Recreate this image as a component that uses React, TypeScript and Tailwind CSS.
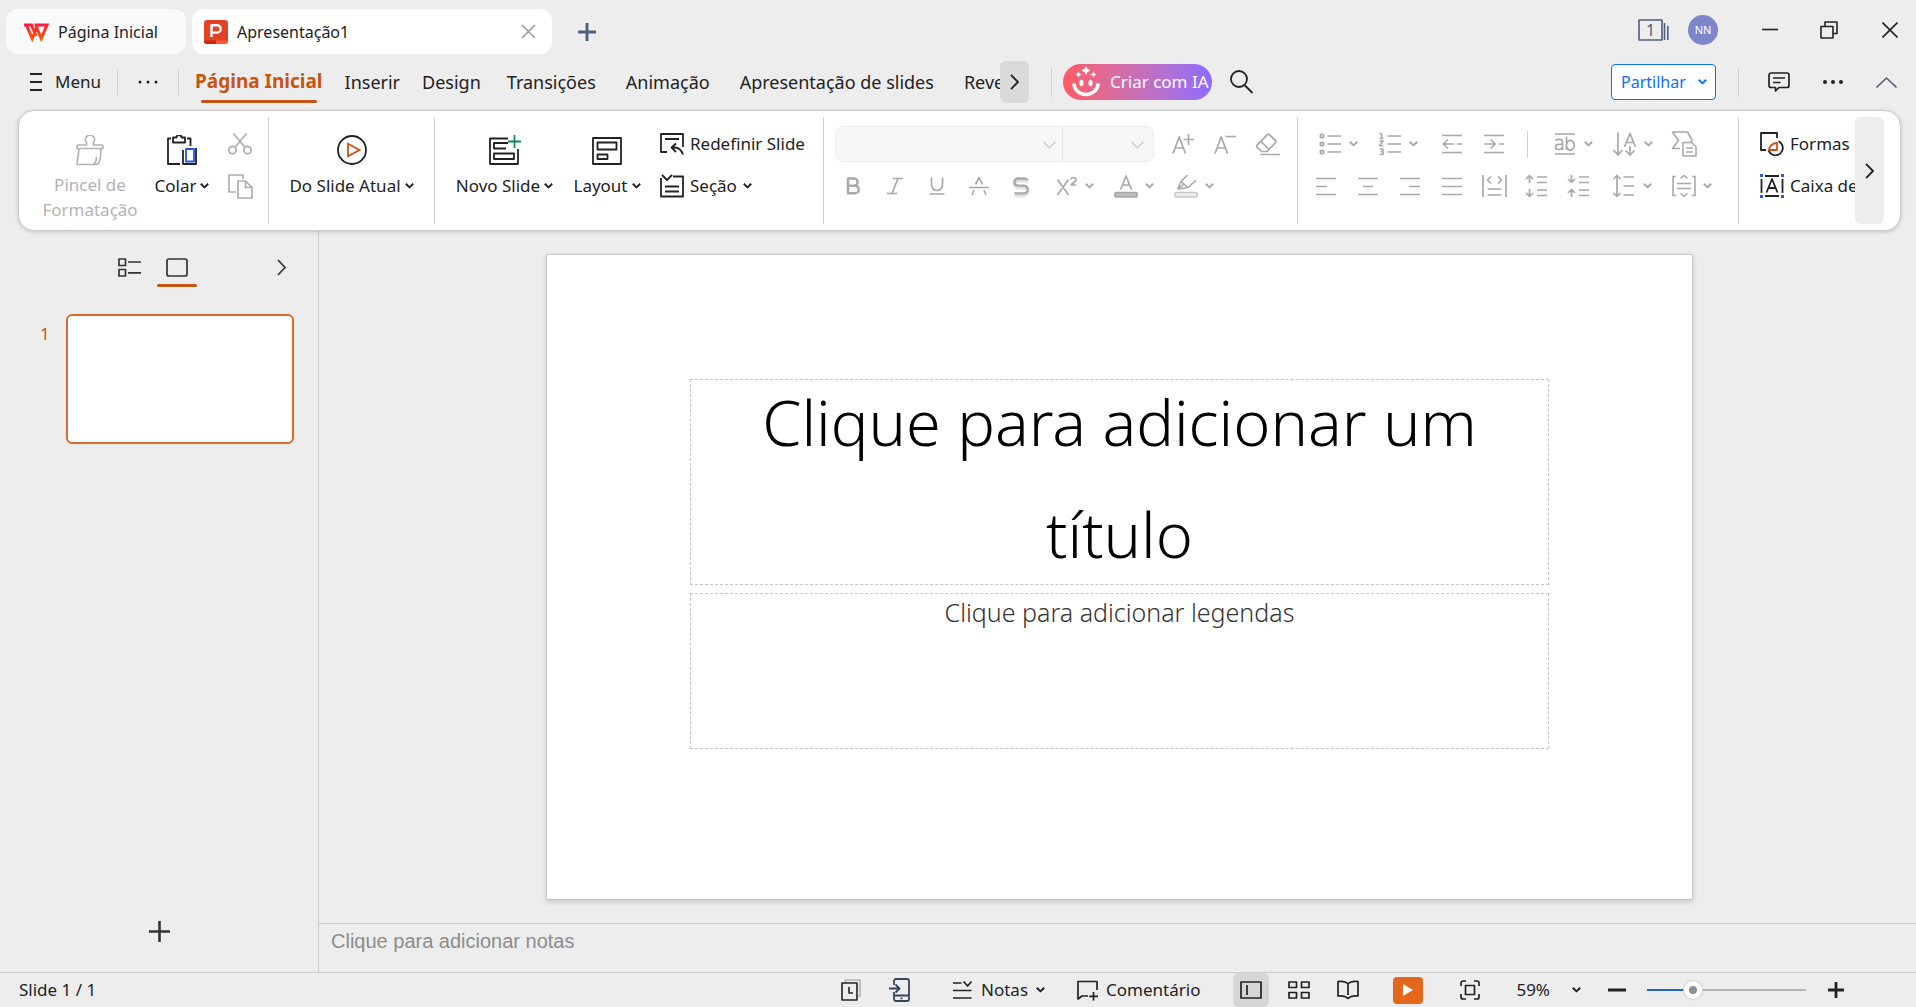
import type { ReactNode } from 'react';

type IcoProps = { w?: number; h?: number; sw?: number; className?: string; children: ReactNode };

function Ico({ w = 24, h = 24, sw = 2, className = '', children }: IcoProps) {
  return (
    <svg
      width={w}
      height={h}
      viewBox={`0 0 ${w} ${h}`}
      fill="none"
      stroke="currentColor"
      strokeWidth={sw}
      strokeLinejoin="round"
      aria-hidden="true"
      className={`shrink-0 ${className}`}
    >
      {children}
    </svg>
  );
}

const Chev = ({ className = '' }: { className?: string }) => (
  <Ico w={9} h={6} className={className}>
    <path d="M.8 .8 4.5 4.4 8.2 .8" />
  </Ico>
);

const Divider = ({ className = '' }: { className?: string }) => (
  <span className={`w-px shrink-0 bg-[#d0d0d0] ${className}`} />
);

function Cell({ label, children }: { label: string; children: ReactNode }) {
  return (
    <button aria-label={label} className="flex h-9 w-[42px] shrink-0 items-center justify-center">
      {children}
    </button>
  );
}

function DropCell({ label, children }: { label: string; children: ReactNode }) {
  return (
    <button aria-label={label} className="flex h-9 w-[60px] shrink-0 items-center justify-center gap-[7px]">
      {children}
      <Chev className="text-[#a9a9a9]" />
    </button>
  );
}

function BigButton({ label, icon, className }: { label: string; icon: ReactNode; className: string }) {
  return (
    <button className={`flex shrink-0 flex-col items-center whitespace-nowrap pt-[18px] ${className}`}>
      {icon}
      <span className="mt-[9px] flex items-center gap-1 leading-6">
        {label}
        <Chev />
      </span>
    </button>
  );
}

function TitleBar() {
  return (
    <header className="flex h-[63px] shrink-0 items-center pl-[6px] text-base text-[#222]">
      <button className="flex h-[45px] w-[180px] items-center rounded-xl bg-[#fafafa] pl-[18px]">
        <Ico w={26} h={20} sw={0}>
          <defs>
            <linearGradient id="brand" gradientUnits="userSpaceOnUse" x1="0" y1="1" x2="0" y2="19">
              <stop offset="0" stopColor="#ff1a3c" />
              <stop offset="1" stopColor="#ff5a00" />
            </linearGradient>
          </defs>
          <g fill="none" stroke="url(#brand)" strokeWidth="3" strokeLinejoin="miter">
            <path d="M0 3H7.500L12 14" />
            <path d="M2.200 2.500 8.200 16.500 13.200 4.500" />
            <path d="M10.500 3H23L17.200 16.500 12.400 5" />
          </g>
        </Ico>
        <span className="ml-2">Página Inicial</span>
      </button>
      <div className="ml-[6px] flex h-[45px] w-[360px] items-center rounded-xl bg-white pl-3 pr-4">
        <Ico w={24} h={24} sw={0}>
          <rect width="24" height="24" rx="3" fill="#e04326" />
          <path d="M0 20.500H12V24H3a3 3 0 0 1-3-3z" fill="#c52a12" />
          <path d="M12 20.500H24V21a3 3 0 0 1-3 3H12z" fill="#ff5a33" />
          <path d="M7.500 17V5.200H13a3.700 3.700 0 0 1 0 7.400H7.500" fill="none" stroke="#fff" strokeWidth="2.400" />
        </Ico>
        <span className="ml-[9px] flex-1">Apresentação1</span>
        <button aria-label="Fechar separador">
          <Ico w={15} h={15} sw={1.6} className="text-[#9a9a9a]">
            <path d="M1 1 14 14M14 1 1 14" />
          </Ico>
        </button>
      </div>
      <button aria-label="Novo separador" className="ml-[26px]">
        <Ico w={18} h={18} sw={2.8} className="text-[#4d5d7c]">
          <path d="M9 0V18M0 9H18" />
        </Ico>
      </button>
      <div className="ml-auto flex items-center pb-[3px] pr-[18px]">
        <button className="relative flex items-center text-[#4d5d7c]" aria-label="1 janela">
          <Ico w={31} h={22} sw={1.6}>
            <path d="M1 1H24V21H1zM26.500 4V21M29.800 7V21" />
          </Ico>
          <span className="absolute left-2 top-0 text-base leading-[22px]">1</span>
        </button>
        <span className="ml-[19px] flex size-[30px] items-center justify-center rounded-full bg-[#7b86cb] text-[11px] text-white">
          NN
        </span>
        <button aria-label="Minimizar" className="ml-11">
          <Ico w={16} h={16} sw={1.6}>
            <path d="M0 7.500H16" />
          </Ico>
        </button>
        <button aria-label="Restaurar" className="ml-[42px]">
          <Ico w={18} h={18} sw={1.6}>
            <path d="M1 5.500H13V17H1zM5 5.500V1H17V12.500H13" />
          </Ico>
        </button>
        <button aria-label="Fechar" className="ml-[44px]">
          <Ico w={16} h={16} sw={1.6}>
            <path d="M.5 .5 15.500 15.500M15.500 .5 .5 15.500" />
          </Ico>
        </button>
      </div>
    </header>
  );
}

const TABS = ['Transições', 'Animação', 'Apresentação de slides', 'Rever'];

function MenuBar() {
  return (
    <nav className="flex h-[47px] shrink-0 items-center pb-[9px] pl-[30px] pr-[19px] text-lg text-[#222]">
      <button className="flex items-center text-[17px]">
        <Ico w={12} h={18} sw={1.8}>
          <path d="M0 1H12M0 9H12M0 17H12" />
        </Ico>
        <span className="ml-[13px]">Menu</span>
      </button>
      <Divider className="ml-4 h-[25px]" />
      <button aria-label="Mais comandos" className="ml-5">
        <Ico w={20} h={4} sw={0}>
          <g fill="currentColor">
            <circle cx="2" cy="2" r="1.500" />
            <circle cx="10" cy="2" r="1.500" />
            <circle cx="18" cy="2" r="1.500" />
          </g>
        </Ico>
      </button>
      <Divider className="ml-5 h-[25px]" />
      <div className="ml-4 flex h-[42px] w-[805px] min-w-0 items-center gap-[22px] overflow-hidden whitespace-nowrap">
        <button className="relative h-[42px] text-[19px] font-bold text-[#c55511]">
          Página Inicial
          <span className="absolute inset-x-[6px] bottom-0 h-[3px] rounded-full bg-[#c55511]" />
        </button>
        <button>Inserir</button>
        <button>Design</button>
        {TABS.map((t) => (
          <button key={t} className="px-1">
            {t}
          </button>
        ))}
      </div>
      <button aria-label="Mais separadores" className="flex h-[42px] w-[29px] shrink-0 items-center justify-center rounded-md bg-[#dadada]">
        <Ico w={9} h={16} sw={1.8}>
          <path d="M1 .8 8 8 1 15.200" />
        </Ico>
      </button>
      <Divider className="ml-[22px] h-[30px]" />
      <button className="ml-[11px] flex h-9 w-[149px] shrink-0 items-center whitespace-nowrap rounded-full bg-linear-to-r from-[#ff5a62] to-[#8f6bff] pl-[9px] text-[17px] text-white">
        <Ico w={28} h={34} sw={3.6}>
          <path d="M2 18.500a12 11 0 0 0 24 0" />
          <g fill="currentColor" stroke="none">
            <ellipse cx="9.500" cy="18" rx="2" ry="3.200" />
            <ellipse cx="18.500" cy="18" rx="2" ry="3.200" />
            <path d="M14 1l1.600 2.900L18.500 5.500l-2.900 1.600L14 10l-1.600-2.900L9.500 5.500l2.900-1.600z" />
            <path d="M6.500 6.500l1 2 2 1-2 1-1 2-1-2-2-1 2-1zM21.500 6.500l1 2 2 1-2 1-1 2-1-2-2-1 2-1z" />
          </g>
        </Ico>
        <span className="ml-[10px]">Criar com IA</span>
      </button>
      <button aria-label="Procurar" className="ml-[18px]">
        <Ico w={24} h={24} sw={1.800}>
          <circle cx="9" cy="9" r="8" />
          <path d="M14.500 15 22.500 23" />
        </Ico>
      </button>
      <div className="ml-auto flex items-center">
        <button className="flex h-9 w-[105px] items-center justify-between rounded border-[1.5px] border-[#0d6efd] bg-white pl-[9px] pr-2 text-base text-[#0d6efd]">
          Partilhar
          <Chev />
        </button>
        <Divider className="ml-[22px] h-[30px]" />
        <button aria-label="Comentários" className="ml-[29px]">
          <Ico w={22} h={20} sw={1.700}>
            <path d="M3 1H19a2 2 0 0 1 2 2V13.500a2 2 0 0 1-2 2H11L7.500 19V15.500H3a2 2 0 0 1-2-2V3a2 2 0 0 1 2-2zM5 6H17M5 10.500H12.500" />
          </Ico>
        </button>
        <button aria-label="Mais" className="ml-[33px]">
          <Ico w={20} h={4} sw={0}>
            <g fill="currentColor">
              <circle cx="2" cy="2" r="2" />
              <circle cx="10" cy="2" r="2" />
              <circle cx="18" cy="2" r="2" />
            </g>
          </Ico>
        </button>
        <button aria-label="Recolher friso" className="ml-[33px]">
          <Ico w={21} h={11} sw={1.600} className="text-[#5d6470]">
            <path d="M.5 10.500 10.500 1 20.500 10.500" />
          </Ico>
        </button>
      </div>
    </nav>
  );
}

const lineSets = {
  left: 'M0 1.500H20M0 9.500H11M0 17.500H20',
  center: 'M0 1.500H20M5 9.500H15M0 17.500H20',
  right: 'M0 1.500H20M9 9.500H20M0 17.500H20',
  justify: 'M0 1.500H20M0 9.500H20M0 17.500H20',
};

function FontGroup() {
  return (
    <div className="flex shrink-0 flex-col gap-[6px] pl-2 pr-[9px] pt-[9px] text-[#a9a9a9]">
      <div className="flex items-center">
        <div className="relative ml-[3px] flex h-9 w-[319px] items-stretch overflow-hidden rounded-lg border border-[#ececec] bg-[#f7f7f7]">
          <select aria-label="Tipo de letra" disabled className="w-[227px] appearance-none border-r border-[#e6e6e6]" />
          <select aria-label="Tamanho" disabled className="flex-1 appearance-none" />
          <Ico w={13} h={8} sw={1.600} className="pointer-events-none absolute right-[97px] top-[14px] text-[#cfcfcf]">
            <path d="M.5 .8 6.500 6.800 12.500 .8" />
          </Ico>
          <Ico w={13} h={8} sw={1.600} className="pointer-events-none absolute right-[9px] top-[14px] text-[#cfcfcf]">
            <path d="M.5 .8 6.500 6.800 12.500 .8" />
          </Ico>
        </div>
        <span className="w-2" />
        <Cell label="Aumentar letra">
          <Ico w={22} h={22} sw={1.700}>
            <path d="M1 20.500 7.200 4 13.500 20.500M3.500 15H11M16.500 1V12M11.500 6.500H22" />
          </Ico>
        </Cell>
        <Cell label="Diminuir letra">
          <Ico w={22} h={22} sw={1.700}>
            <path d="M1 20.500 7.200 4 13.500 20.500M3.500 15H11M11.500 3.500H22" />
          </Ico>
        </Cell>
        <Cell label="Limpar formatação">
          <Ico w={25} h={23} sw={1.700}>
            <path d="M2 12.200 12.500 1.700a1.500 1.500 0 0 1 2 0L20.500 7.700a1.500 1.500 0 0 1 0 2L12 18.500H6.500L2 14.200a1.400 1.400 0 0 1 0-2zM6 8.500 14 16.500M5.500 21.500H25" />
          </Ico>
        </Cell>
      </div>
      <div className="flex items-center">
        <Cell label="Negrito">
          <Ico w={14} h={18} sw={2.500}>
            <path d="M2 1.500H8a3.600 3.600 0 0 1 0 7.300H2zM2 8.800H9a3.700 3.700 0 0 1 0 7.500H2z" />
          </Ico>
        </Cell>
        <Cell label="Itálico">
          <Ico w={18} h={18} sw={1.700}>
            <path d="M7 1.500H17M1 16.500H11M12 1.500 6 16.500" />
          </Ico>
        </Cell>
        <Cell label="Sublinhado">
          <Ico w={16} h={18} sw={1.700}>
            <path d="M2.500 .5V8a5.500 5.500 0 0 0 11 0V.5M.5 17H15.500" />
          </Ico>
        </Cell>
        <Cell label="Rasurado">
          <Ico w={20} h={20} sw={1.700}>
            <path d="M0 11.500H20M6.500 8.500 10 1.500 13.500 8.500M5 14 3 19M15 14 17 19" />
          </Ico>
        </Cell>
        <Cell label="Sombra">
          <Ico w={16} h={18} sw={2.300} className="drop-shadow-[0_2px_1px_rgba(0,0,0,0.2)]">
            <path d="M14.500 3.500a3 3 0 0 0-3-2H5a3.500 3.500 0 0 0 0 7.200H11a3.800 3.800 0 0 1 0 7.600H1.500" />
          </Ico>
        </Cell>
        <span className="w-[2px]" />
        <DropCell label="Sobrescrito">
          <Ico w={24} h={22} sw={1.700}>
            <path d="M3.500 4.500 14.500 20M14.500 4.500 3.500 20M17 4.500a2.500 2.200 0 1 1 4.500 1.500L17 10H22.500" />
          </Ico>
        </DropCell>
        <DropCell label="Cor da letra">
          <Ico w={24} h={24} sw={1.700}>
            <path d="M6.500 15.500 12 2 17.500 15.500M8.500 11H15.500" />
            <rect x="1" y="18.500" width="22" height="4.500" rx="1" fill="#bdbdbd" />
          </Ico>
        </DropCell>
        <DropCell label="Realce">
          <Ico w={24} h={24} sw={1.600}>
            <path d="M4 15 7 7.500 13.500 1M22 6.500 14 13.500 4 15 9.500 10.500M7 7.500 14 13.500" />
            <rect x="1" y="18.500" width="22" height="4.500" rx="1" fill="#ececec" stroke="#c9c9c9" />
          </Ico>
        </DropCell>
      </div>
    </div>
  );
}

function ParagraphGroup() {
  return (
    <div className="flex shrink-0 flex-col gap-[6px] pl-[7px] pr-4 pt-[9px] text-[#a9a9a9]">
      <div className="flex items-center pl-[3px]">
        <DropCell label="Marcas">
          <Ico w={24} h={22} sw={1.700}>
            <circle cx="4" cy="3" r="1.700" />
            <circle cx="4" cy="11" r="1.700" />
            <circle cx="4" cy="19" r="1.700" />
            <path d="M9.500 3H23M9.500 11H23M9.500 19H23" />
          </Ico>
        </DropCell>
        <DropCell label="Numeração">
          <Ico w={24} h={24} sw={1.600}>
            <path d="M1.500 1.500H3.500V6.500M1.500 6.500H5.500M1.500 9H5.200L1.500 13.800H5.500M1.500 17H5V22.500H1.500M2.500 19.600H5" />
            <path d="M9.500 4H23M9.500 12H23M9.500 20H23" />
          </Ico>
        </DropCell>
        <span className="w-[3px]" />
        <Cell label="Diminuir avanço">
          <Ico w={20} h={20} sw={1.700}>
            <path d="M0 1.500H20M0 18.500H20M1 10H12M15 10H20M6 5.500 1.200 10 6 14.500" />
          </Ico>
        </Cell>
        <Cell label="Aumentar avanço">
          <Ico w={20} h={20} sw={1.700}>
            <path d="M0 1.500H20M0 18.500H20M0 10H11M15 10H20M6.500 5.500 11.300 10 6.500 14.500" />
          </Ico>
        </Cell>
        <Divider className="mx-[12px] h-[27px]" />
        <span className="w-[3px]" />
        <DropCell label="Direção do texto">
          <Ico w={24} h={24} sw={1.700}>
            <path d="M2 2H22M2 22H22M2.500 8.500C4 7 9.500 6.500 9.500 10V18M9.500 12C5 12 2.500 12.500 2.500 15.200S8 18.500 9.500 15.500M13.500 4.500V18M13.500 12.500a3.900 4.800 0 1 1 0 1.500" />
          </Ico>
        </DropCell>
        <DropCell label="Orientação">
          <Ico w={24} h={24} sw={1.700}>
            <path d="M5 .5V23M.5 18 5 23 9.500 18M11.500 15 17 1.500 22.500 15M13.500 10.500H20.500M17 14V23M12.500 18.500 17 23 21.500 18.500" />
          </Ico>
        </DropCell>
        <Cell label="Converter texto">
          <Ico w={26} h={26} sw={1.600}>
            <path d="M20 12 21 9 16.500 1H1.500L7.500 9.500 1.500 17.500H9M12 11.500H20.500L25 15.500V25H12zM15 17H22M15 21H22" />
          </Ico>
        </Cell>
      </div>
      <div className="flex items-center">
        <Cell label="Alinhar à esquerda"><Ico w={20} h={19} sw={1.700}><path d={lineSets.left} /></Ico></Cell>
        <Cell label="Centrar"><Ico w={20} h={19} sw={1.700}><path d={lineSets.center} /></Ico></Cell>
        <Cell label="Alinhar à direita"><Ico w={20} h={19} sw={1.700}><path d={lineSets.right} /></Ico></Cell>
        <Cell label="Justificar"><Ico w={20} h={19} sw={1.700}><path d={lineSets.justify} /></Ico></Cell>
        <Cell label="Distribuir">
          <Ico w={25} h={22} sw={1.700}>
            <path d="M1 0V22M24 0V22M5.500 14H19.500M5.500 20H19.500M9 1.500 5.500 5 9 8.500M16 1.500 19.500 5 16 8.500" />
          </Ico>
        </Cell>
        <Cell label="Aumentar espaçamento">
          <Ico w={22} h={24} sw={1.700}>
            <path d="M4.500 1.500V9M1 5 4.500 1.500 8 5M4.500 15V22.500M1 19 4.500 22.500 8 19M12 3H22M12 8.500H22M12 16H22M12 21.500H22" />
          </Ico>
        </Cell>
        <Cell label="Diminuir espaçamento">
          <Ico w={22} h={24} sw={1.700}>
            <path d="M4.500 1V8.500M1 5 4.500 8.500 8 5M4.500 15.500V23M1 19 4.500 15.500 8 19M12 3H22M12 8.500H22M12 16H22M12 21.500H22" />
          </Ico>
        </Cell>
        <span className="w-[3px]" />
        <DropCell label="Espaçamento entre linhas">
          <Ico w={24} h={24} sw={1.700}>
            <path d="M5 1.500V22.500M1.500 5 5 1.500 8.500 5M1.500 19 5 22.500 8.500 19M11.500 3H22M11.500 12H22M11.500 21H22" />
          </Ico>
        </DropCell>
        <DropCell label="Alinhamento vertical">
          <Ico w={24} h={24} sw={1.600}>
            <path d="M4 2.500H1V21.500H4M20 2.500H23V21.500H20M5 9.500H19M5 14.500H19M8.500 4.500 12 1.500 15.500 4.500M8.500 19.500 12 22.500 15.500 19.500" />
          </Ico>
        </DropCell>
      </div>
    </div>
  );
}

function Ribbon() {
  return (
    <section className="relative z-10 ml-[18px] mr-[15px] flex h-[121px] shrink-0 items-stretch rounded-2xl border border-[#cbcbcb] bg-white pr-4 text-[17px] text-[#222] shadow-[0_1px_4px_rgba(0,0,0,0.18)]">
      <div className="flex shrink-0 py-[6px]">
        <button disabled className="ml-[14px] flex w-[114px] flex-col items-center pt-[18px] text-[#b3b3b3]">
          <Ico w={28} h={31} sw={1.700}>
            <path d="M1 13.500V11.500a1.500 1.500 0 0 1 1.500-1.500H10.500V7.500a4.500 4.500 0 1 1 7 0V10H25.500a1.500 1.500 0 0 1 1.500 1.500V13.500zM3 14 1 29.500H21C24.500 28 25 20 25 14M17 29.500C19.500 28 20.500 26 20.500 22" />
          </Ico>
          <span className="mt-[6px] leading-[25px]">Pincel de Formatação</span>
        </button>
        <BigButton
          label="Colar"
          className="ml-px w-[68px]"
          icon={
            <Ico w={30} h={30} sw={1.800}>
              <path d="M13 29H1V3.500H4M20 3.500H23.500V11M6 2.500H9.500a2.500 2.500 0 0 1 5 0H18V7.500H6zM16 15V29H29V13" />
              <rect x="19" y="14" width="8" height="12.500" stroke="#2457e6" />
            </Ico>
          }
        />
        <div className="ml-[5px] flex w-[38px] flex-col items-center gap-[6px] pt-[9px] text-[#adadad]">
          <button aria-label="Cortar" className="flex h-9 items-center">
            <Ico w={24} h={24} sw={1.700}>
              <circle cx="4.500" cy="18" r="3.700" />
              <circle cx="19.500" cy="18" r="3.700" />
              <path d="M5.500 1.500 17 15.200M18.500 1.500 7 15.200" />
            </Ico>
          </button>
          <button aria-label="Copiar" className="flex h-9 items-center">
            <Ico w={25} h={25} sw={1.700}>
              <path d="M8 18H1V1H15V5M10 7H17.500L24 13.500V24H10zM17.500 7V13.500H24" />
            </Ico>
          </button>
        </div>
        <Divider className="ml-[9px]" />
        <BigButton
          label="Do Slide Atual"
          className="w-[165px]"
          icon={
            <Ico w={30} h={30} sw={1.800}>
              <circle cx="15" cy="15" r="14" />
              <path d="M11 8.800V21.200L22.500 15z" stroke="#cf5114" strokeLinejoin="miter" />
            </Ico>
          }
        />
        <Divider />
        <BigButton
          label="Novo Slide"
          className="ml-[13px] w-[113px]"
          icon={
            <Ico w={32} h={30} sw={1.800}>
              <path d="M19 3.500H1V29H29V14M19 8H5V13.500H17M5 18.500H25V24H5z" />
              <path d="M25.500 0V13M19 6.500H32" stroke="#108a61" />
            </Ico>
          }
        />
        <BigButton
          label="Layout"
          className="w-[92px]"
          icon={
            <Ico w={30} h={30} sw={1.800}>
              <path d="M1 3H29V29H1zM5.500 7.500H24.500V14.500H5.500zM5.500 19.500H15.500V24H5.500z" />
            </Ico>
          }
        />
        <div className="flex w-[170px] flex-col gap-[6px] whitespace-nowrap pl-[7px] pt-[9px]">
          <button className="flex h-9 items-center gap-[6px]">
            <Ico w={24} h={24} sw={1.800}>
              <path d="M7 20H1V2H23V15M5 7H19M11.500 15.500H15C19 15.500 21.500 18.500 23 22.500M16 11.500 11.500 15.500 16 20" />
            </Ico>
            Redefinir Slide
          </button>
          <button className="flex h-9 items-center gap-[6px]">
            <Ico w={24} h={24} sw={1.800}>
              <path d="M1 4V22.500H23V2.500H13M2 1 7 6 12 1M5 12.500H19M5 17.500H19" />
            </Ico>
            Seção
            <Chev />
          </button>
        </div>
        <Divider />
        <FontGroup />
        <Divider />
        <ParagraphGroup />
        <Divider />
      </div>
      <div className="flex min-w-0 flex-1 flex-col gap-[6px] overflow-hidden whitespace-nowrap pl-[21px] pt-[15px]">
        <button className="flex h-9 items-center gap-[6px]">
          <Ico w={24} h={24} sw={1.800}>
            <path d="M6 18H1V1H17V6M18.500 9.300A7.300 7.300 0 1 1 8.600 18.300" />
            <path d="M17 11V18H9A8 7.500 0 0 1 17 11z" stroke="#cf5114" />
          </Ico>
          Formas
        </button>
        <button className="flex h-9 items-center gap-[6px]">
          <Ico w={24} h={24} sw={1.800}>
            <path d="M5 2H19M5 22H19M1.500 5V19M22.500 5V19M6.500 18.500 12 5 17.500 18.500M8.500 14H15.500" />
            <path d="M0 0H3V3H0zM21 0H24V3H21zM0 21H3V24H0zM21 21H24V24H21z" fill="#2457e6" stroke="none" />
          </Ico>
          Caixa de
        </button>
      </div>
      <button aria-label="Mais comandos do friso" className="my-[6px] flex w-[29px] shrink-0 items-center justify-center rounded-md bg-[#ededed]">
        <Ico w={9} h={16} sw={1.800}>
          <path d="M1 .8 8 8 1 15.200" />
        </Ico>
      </button>
    </section>
  );
}

function SlidePanel() {
  return (
    <aside className="flex w-[319px] shrink-0 flex-col border-r border-[#cbcbcb] text-[#333]">
      <div className="flex h-[56px] items-end pl-[118px] pr-8">
        <button aria-label="Destaques" className="flex h-[38px] items-start pt-[9px]">
          <Ico w={23} h={19} sw={1.700}>
            <path d="M1 1H7.500V7.500H1zM1 11.500H7.500V18H1zM10 4H23M10 14.800H23" />
          </Ico>
        </button>
        <button aria-label="Slides" className="ml-4 flex h-[38px] w-10 flex-col items-center justify-between pt-[9px]">
          <Ico w={22} h={19} sw={1.700}>
            <rect x="1" y="1" width="20" height="17" rx="2" />
          </Ico>
          <span className="h-[3px] w-full rounded-full bg-[#c55511]" />
        </button>
        <button aria-label="Fechar painel" className="ml-auto flex h-[38px] items-start pt-[10px]">
          <Ico w={9} h={17} sw={1.700}>
            <path d="M1 1 8 8.500 1 16" />
          </Ico>
        </button>
      </div>
      <div className="mt-[27px] flex pl-10 pr-6">
        <span className="w-[26px] pt-[7px] text-[17px] text-[#c55511]">1</span>
        <button aria-label="Slide 1" className="aspect-[228/130] flex-1 rounded-md border-2 border-[#d86b2b] bg-white" />
      </div>
      <button aria-label="Adicionar slide" className="mx-auto mb-[30px] mt-auto">
        <Ico w={21} h={21} sw={2.600}>
          <path d="M10.500 0V21M0 10.500H21" />
        </Ico>
      </button>
    </aside>
  );
}

function Editor() {
  return (
    <main className="flex min-w-0 flex-1 flex-col">
      <div className="flex min-h-0 flex-1 items-center justify-center pl-1">
        <article className="flex aspect-[1147/646] w-[72%] flex-col items-center gap-[8px] border border-[#c6c6c6] bg-white pt-[124px] font-light shadow-[0_2px_5px_rgba(0,0,0,0.16)]">
          <h1 className="h-[206px] w-3/4 border border-dashed border-[#c4c4c4] text-center text-[63px] leading-[112px] text-black">
            <span className="-mt-[14px] block">Clique para adicionar um título</span>
          </h1>
          <p className="h-[156px] w-3/4 border border-dashed border-[#c4c4c4] text-center text-[25px] leading-9 text-[#333]">
            Clique para adicionar legendas
          </p>
        </article>
      </div>
      <label className="flex h-[49px] shrink-0 border-t border-[#cbcbcb]">
        <textarea
          aria-label="Notas"
          placeholder="Clique para adicionar notas"
          className="w-full resize-none bg-transparent pl-3 pt-[5px] font-['Liberation_Sans',sans-serif] text-xl leading-6 outline-none placeholder:text-[#8c8c8c]"
        />
      </label>
    </main>
  );
}

function StatusBar() {
  return (
    <footer className="flex h-[35px] shrink-0 items-center border-t border-[#cbcbcb] pl-[19px] pr-[72px] text-[17px] text-[#222]">
      <span>Slide 1 / 1</span>
      <div className="ml-auto flex items-center whitespace-nowrap">
        <button aria-label="Histórico">
          <Ico w={20} h={22} sw={1.600}>
            <path d="M4.500 3.500V1H19V17H16.500" stroke="#b5b5b5" />
            <path d="M1 4H16V21H1zM8 8V14H12" />
          </Ico>
        </button>
        <button aria-label="Enviar para telemóvel" className="ml-7 text-[#39445c]">
          <Ico w={22} h={24} sw={1.800}>
            <path d="M5 7V3a2 2 0 0 1 2-2H18a2 2 0 0 1 2 2V21a2 2 0 0 1-2 2H7a2 2 0 0 1-2-2V14M5 17.500H20M0 10.500H10M6.500 6.500 10.500 10.500 6.500 14.500M11.500 20.300H13.500" />
          </Ico>
        </button>
        <button className="ml-[42px] flex items-center">
          <Ico w={19} h={18} sw={1.700}>
            <path d="M0 2H8.500M10.500 .5 14.500 5 18.500 .5M0 9.500H18.500M0 17H18.500" />
          </Ico>
          <span className="ml-[9px]">Notas</span>
          <Chev className="ml-2" />
        </button>
        <button className="ml-8 flex items-center">
          <Ico w={22} h={22} sw={1.700}>
            <path d="M20 11V2.500H1V20L5 17H11M16.500 13V21.500M12.200 17.300H21" />
          </Ico>
          <span className="ml-[7px]">Comentário</span>
        </button>
        <button aria-label="Normal" className="ml-[33px] flex h-[34px] w-9 items-center justify-center rounded-md bg-[#d6d6d6]">
          <Ico w={22} h={18} sw={1.700}>
            <path d="M1 1H21V17H1zM7 4V14" />
          </Ico>
        </button>
        <button aria-label="Organizador de slides" className="ml-[19px]">
          <Ico w={22} h={18} sw={1.700}>
            <path d="M1 1H8.500V6.500H1zM13.500 1H21V6.500H13.500zM1 11.500H8.500V17H1zM13.500 11.500H21V17H13.500z" />
          </Ico>
        </button>
        <button aria-label="Vista de leitura" className="ml-[27px]">
          <Ico w={22} h={20} sw={1.700}>
            <path d="M11 4C9 1.500 5 1 1 1.500V16C5 15.500 9 16.500 11 18.500 13 16.500 17 15.500 21 16V1.500C17 1 13 1.500 11 4zM11 4V15" />
          </Ico>
        </button>
        <button aria-label="Apresentação" className="ml-[34px] flex h-[27px] w-[30px] items-center justify-center rounded bg-[#e5671b]">
          <Ico w={10} h={12} sw={0}>
            <path d="M0 0 10 6 0 12z" fill="#fff" />
          </Ico>
        </button>
        <button aria-label="Ajustar à janela" className="ml-[37px]">
          <Ico w={20} h={20} sw={1.700}>
            <path d="M1 6V3a2 2 0 0 1 2-2H6M14 1H17a2 2 0 0 1 2 2V6M19 14V17a2 2 0 0 1-2 2H14M6 19H3a2 2 0 0 1-2-2V14M5.500 5.500H14.500V14.500H5.500z" />
          </Ico>
        </button>
        <button className="ml-9 flex items-center">
          59%
          <Chev className="ml-[22px]" />
        </button>
        <button aria-label="Reduzir" className="ml-[27px]">
          <Ico w={18} h={18} sw={3}>
            <path d="M0 9H18" />
          </Ico>
        </button>
        <input
          type="range"
          aria-label="Zoom"
          min={0}
          max={100}
          defaultValue={26}
          className="ml-[21px] h-5 w-[159px] appearance-none bg-[linear-gradient(to_right,#1a63d0_29%,#b5b5b5_29%)] bg-[length:100%_2px] bg-center bg-no-repeat [&::-webkit-slider-thumb]:size-[18px] [&::-webkit-slider-thumb]:appearance-none [&::-webkit-slider-thumb]:rounded-full [&::-webkit-slider-thumb]:border-[5px] [&::-webkit-slider-thumb]:border-white [&::-webkit-slider-thumb]:bg-[#8f8f8f] [&::-webkit-slider-thumb]:shadow-[0_0_1px_1px_#d0d0d0]"
        />
        <button aria-label="Ampliar" className="ml-[22px]">
          <Ico w={16} h={16} sw={2.800}>
            <path d="M8 0V16M0 8H16" />
          </Ico>
        </button>
      </div>
    </footer>
  );
}

export default function App() {
  return (
    <div className="flex h-screen flex-col overflow-hidden bg-[#ededed] font-['Noto_Sans','Open_Sans',sans-serif]">
      <TitleBar />
      <MenuBar />
      <Ribbon />
      <div className="flex min-h-0 flex-1">
        <SlidePanel />
        <Editor />
      </div>
      <StatusBar />
    </div>
  );
}
